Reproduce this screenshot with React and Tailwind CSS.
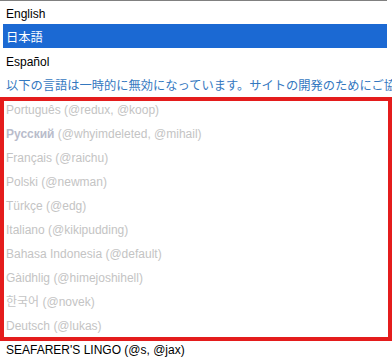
export default function App() {
  const disabled = [
    { name: "Português", by: "(@redux, @koop)" },
    { name: "Русский", by: "(@whyimdeleted, @mihail)", bold: true },
    { name: "Français", by: "(@raichu)" },
    { name: "Polski", by: "(@newman)" },
    { name: "Türkçe", by: "(@edg)" },
    { name: "Italiano", by: "(@kikipudding)" },
    { name: "Bahasa Indonesia", by: "(@default)" },
    { name: "Gàidhlig", by: "(@himejoshihell)" },
    { name: "한국어", by: "(@novek)" },
    { name: "Deutsch", by: "(@lukas)" },
  ];
  return (
    <div className="relative w-[392px] h-[362px] overflow-hidden bg-white font-['Liberation_Sans','Noto_Sans_CJK_JP','Noto_Sans_CJK_KR',sans-serif] text-[12px] leading-[14px] text-black">
      <div className="w-[387px] border-t border-[#808080]">
        <div className="h-[23px] pt-[6px] pl-[6px] whitespace-nowrap">English</div>
        <div className="h-6 ml-[3px] pl-[3px] pt-[7px] bg-[#1b69d3] text-white text-[12.3px] whitespace-nowrap">日本語</div>
        <div className="h-6 pt-[7px] pl-[6px] whitespace-nowrap">Español</div>
      </div>
      <div className="h-6 pt-[7px] pl-[6px] whitespace-nowrap text-[12.25px] text-[#3478bf]">
        以下の言語は一時的に無効になっています。サイトの開発のためにご協力ください。
      </div>
      <div className="relative w-[387px]">
        {disabled.map((d) => (
          <div key={d.name} className="h-6 pt-[7px] pl-[6px] whitespace-nowrap text-[#c4c4c4]">
            <span className={d.bold ? "font-bold text-[#b9bccb]" : ""}>{d.name}</span> {d.by}
          </div>
        ))}
        <div className="absolute top-[1px] left-0 w-[392px] h-[244px] border-4 border-[#e41c1c] pointer-events-none"></div>
      </div>
      <div className="h-6 pt-[7px] pl-[6px] whitespace-nowrap">SEAFARER'S LINGO (@s, @jax)</div>
    </div>
  );
}
